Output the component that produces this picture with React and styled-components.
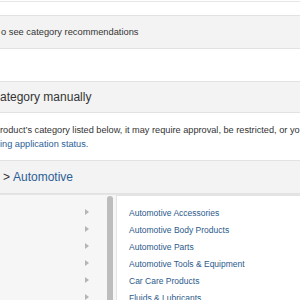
import React from 'react';
import styled, { createGlobalStyle } from 'styled-components';

const Global = createGlobalStyle`
  html, body {
    margin: 0;
    padding: 0;
    background: #fff;
    overflow: hidden;
  }
  body {
    font-family: Arial, "Liberation Sans", sans-serif;
    color: #333;
  }
`;

const Page = styled.div`
  width: 300px;
  height: 300px;
  overflow: hidden;
  display: flex;
  flex-direction: column;
  & > * { flex-shrink: 0; }
`;

const TopGap = styled.div`
  height: 13px;
  margin-top: 1px;
  border-top: 1px solid #e6e6e6;
`;

const Band = styled.div`
  display: flex;
  align-items: center;
  height: ${p => p.h}px;
  box-sizing: border-box;
  background: #f3f3f3;
  border-top: 1px solid #e2e2e2;
  border-bottom: 1px solid #e2e2e2;
  padding-left: ${p => p.pl || 0}px;
  font-size: ${p => p.size}px;
  color: ${p => p.color || '#333'};
  white-space: nowrap;
`;

const Spacer = styled.div`
  height: ${p => p.h}px;
`;

const Para = styled.div`
  height: 47px;
  box-sizing: border-box;
  padding-top: 10px;
  font-size: 9.2px;
  line-height: 14px;
  color: #333;
  white-space: nowrap;
`;

const Link = styled.span`
  color: #2b6096;
`;

const Crumb = styled.span`
  color: #333;
  margin-right: 3px;
`;

const Browse = styled.div`
  flex: 1;
  display: flex;
  background: #f6f6f6;
  border-top: 1px solid #e4e4e4;
`;

const LeftCol = styled.ul`
  list-style: none;
  margin: 0;
  padding: 8px 0 0;
  width: 105px;
`;

const LeftItem = styled.li`
  height: 17px;
  display: flex;
  align-items: center;
  justify-content: flex-end;
  padding-right: 16px;
`;

const Arrow = styled.span`
  width: 0;
  height: 0;
  border-top: 3.5px solid transparent;
  border-bottom: 3.5px solid transparent;
  border-left: 4px solid #b5b5b5;
`;

const Scroll = styled.div`
  width: 9px;
  display: flex;
  justify-content: center;
  padding-top: 1px;
`;

const Thumb = styled.div`
  width: 6px;
  height: 200px;
  border-radius: 3px;
  background: #bdbdbd;
`;

const RightCol = styled.ul`
  list-style: none;
  margin: 0 0 0 2px;
  padding: 8px 0 0 12px;
  flex: 1;
  background: #fff;
  border-left: 1px solid #e4e4e4;
  border-top: 1px solid #e4e4e4;
`;

const RightItem = styled.li`
  height: 17px;
  display: flex;
  align-items: center;
  font-size: 8.5px;
  color: #2b5a8a;
  white-space: nowrap;
`;

const subs = [
  'Automotive Accessories',
  'Automotive Body Products',
  'Automotive Parts',
  'Automotive Tools & Equipment',
  'Car Care Products',
  'Fluids & Lubricants',
];

export default function App() {
  return (
    <Page>
      <Global />
      <TopGap />
      <Band h={34} size={9.3} pl={1}>o see category recommendations</Band>
      <Spacer h={32} />
      <Band h={32} size={12}>ategory manually</Band>
      <Para>
        roduct’s category listed below, it may require approval, be restricted, or yo
        <br />
        <Link>ing application status.</Link>
      </Para>
      <Band h={34} size={12} color="#2b6096" pl={3}>
        <Crumb>&gt;</Crumb>Automotive
      </Band>
      <Browse>
        <LeftCol>
          {subs.map(s => (
            <LeftItem key={s}><Arrow /></LeftItem>
          ))}
        </LeftCol>
        <Scroll><Thumb /></Scroll>
        <RightCol>
          {subs.map(s => (
            <RightItem key={s}>{s}</RightItem>
          ))}
        </RightCol>
      </Browse>
    </Page>
  );
}
